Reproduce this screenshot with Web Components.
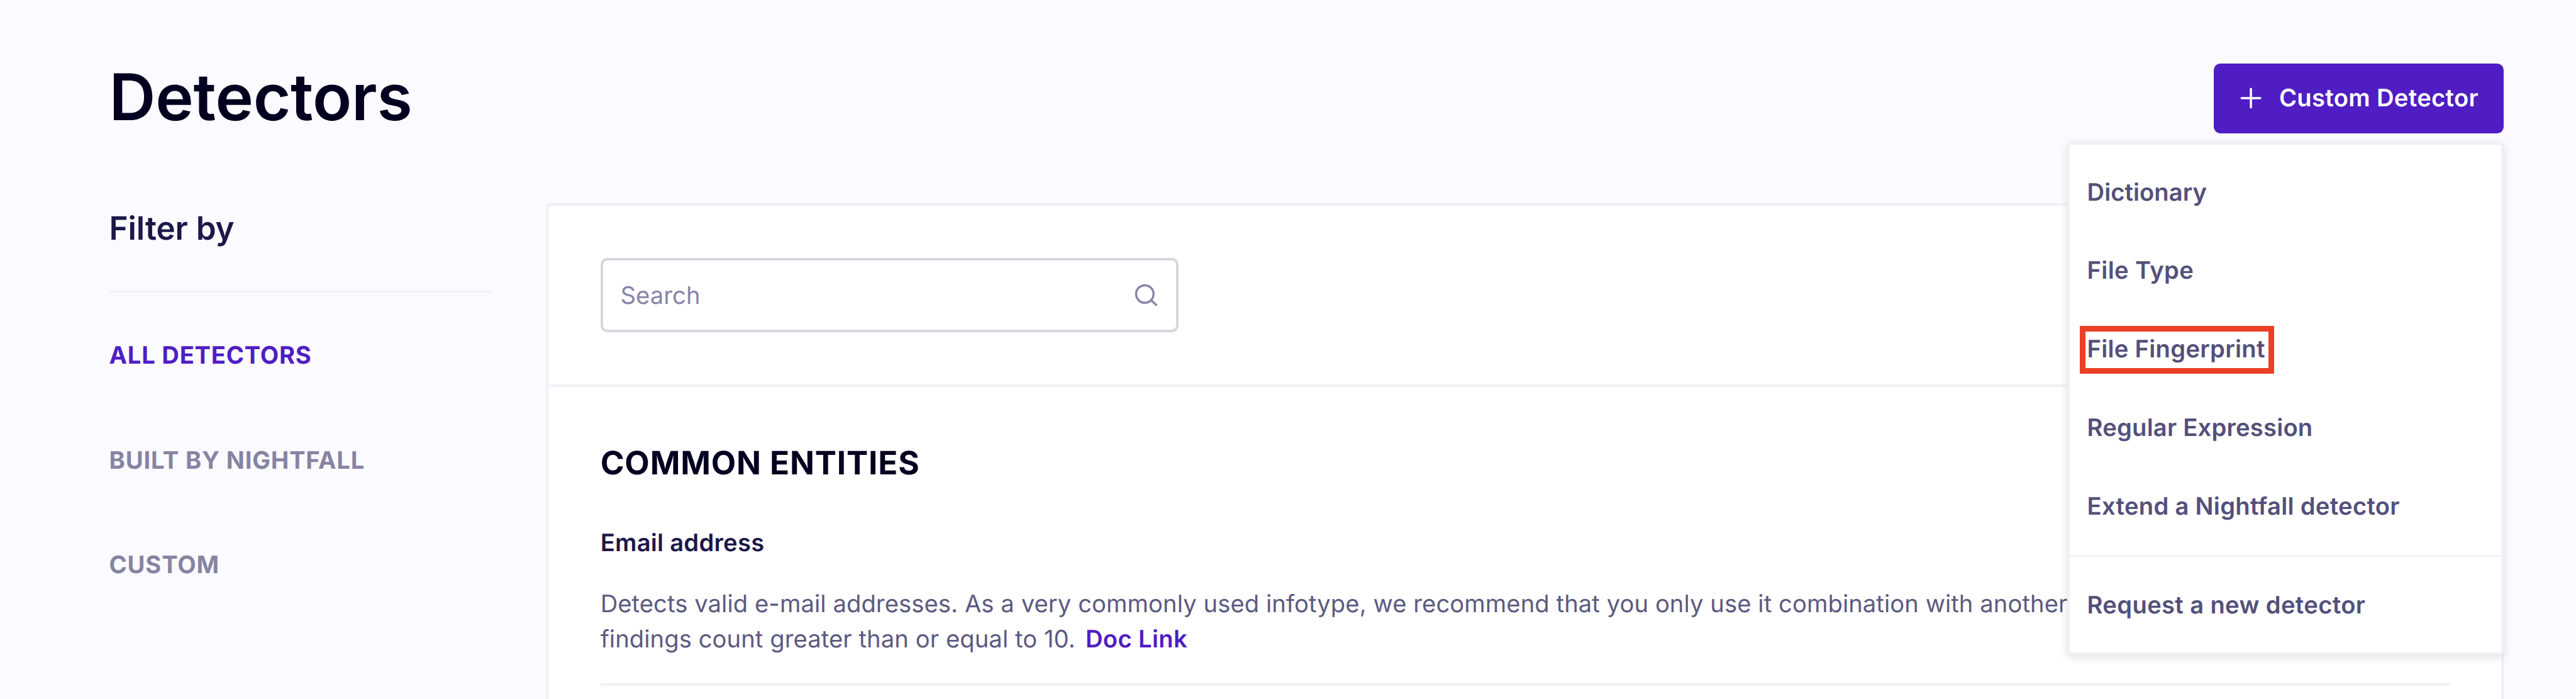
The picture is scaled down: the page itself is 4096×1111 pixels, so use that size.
<!DOCTYPE html>
<html lang="en">
<head>
<meta charset="utf-8">
<title>Detectors</title>
<style>
  html, body { margin: 0; height: 100%; overflow: hidden; background: #fbfaff; }
</style>
</head>
<body>
<detectors-page></detectors-page>

<script>
const define = (name, html) => customElements.define(name, class extends HTMLElement {
  constructor() {
    super();
    const t = document.createElement('template');
    t.innerHTML = html;
    this.attachShadow({ mode: 'open' }).append(t.content.cloneNode(true));
  }
});

define('filter-nav', `
<style>
  :host { display: block; width: 704px; flex: none; }
  h2 { margin: 0; padding-top: 2px; font-size: 59px; font-weight: 600; line-height: 88px; letter-spacing: -.1px; color: #1c1848; }
  hr { margin: 70px 0 0; border: 0; height: 4px; background: #f2f1f6; }
  nav { display: flex; flex-direction: column; gap: 128px; padding-top: 84px; }
  ::slotted(a) { font-size: 44px; font-weight: 700; line-height: 64px; letter-spacing: .95px; color: #8684a2; }
  ::slotted(a.active) { color: #4f1dc3; letter-spacing: .88px; }
</style>
<h2>Filter by</h2>
<hr>
<nav><slot></slot></nav>`);

define('search-field', `
<style>
  :host { display: flex; align-items: center; justify-content: space-between; box-sizing: border-box;
    width: 1060px; height: 136px; padding: 0 34px 0 32px; border: 4.65px solid #d6d5e0; border-radius: 12px;
    font-size: 44px; letter-spacing: .1px; color: #8885a8; background: #fff; }
  span { padding-top: 4px; }
  svg { width: 44px; height: 44px; }
</style>
<span>Search</span>
<svg viewBox="0 0 44 44" fill="none" stroke="#8885a8" stroke-width="4"><circle cx="20" cy="20" r="16"/><path d="M31.3 31.3 42 41"/></svg>`);

define('detector-entry', `
<style>
  :host { display: block; border-bottom: 4.65px solid #f1f0f6; padding-bottom: 48px; }
  h4 { margin: 0 0 48px; font-size: 44px; font-weight: 600; line-height: 64px; letter-spacing: .3px; color: #1c1848; }
  p { margin: 0; font-size: 44px; line-height: 64px; letter-spacing: .09px; color: #5c5a80; white-space: nowrap; }
  ::slotted(a) { font-weight: 600; letter-spacing: .41px; color: #4f1dc3; margin-left: 6px; }
</style>
<h4><slot name="title"></slot></h4>
<p><slot></slot></p>`);

define('detector-card', `
<style>
  :host { display: block; flex: 1; min-width: 0; box-sizing: border-box; height: 960px; margin-left: 96px;
    border: 4.65px solid #f1f0f5; border-radius: 10px; background: #fff; }
  .toolbar { padding: 95.5px 96px 95.5px 95.5px; border-bottom: 4.65px solid #f1f0f5; }
  .list { padding: 101px 95.5px 0; }
  h3 { margin: 0 0 74px; font-size: 59px; font-weight: 700; line-height: 80px; letter-spacing: 1px; color: #03001f; }
</style>
<div class="toolbar"><search-field></search-field></div>
<div class="list"><h3>COMMON ENTITIES</h3><slot></slot></div>`);

define('primary-button', `
<style>
  :host { display: flex; align-items: center; gap: 30px; box-sizing: border-box; width: 532px; height: 128px;
    padding-left: 46px; border-radius: 12px; background: #4f1dc3; color: #fff; font-size: 44px; font-weight: 600;
    letter-spacing: .37px; white-space: nowrap; }
  svg { width: 44px; height: 44px; flex: none; }
</style>
<svg viewBox="0 0 44 44" fill="none" stroke="#fff" stroke-width="4" stroke-linecap="round"><path d="M22 5v34M5 22h34"/></svg>
<span><slot></slot></span>`);

define('menu-item', `
<style>
  :host { display: flex; align-items: center; position: relative; height: 144px; padding-left: 31.5px;
    font-size: 44px; font-weight: 600; letter-spacing: .33px; color: #53507a; white-space: nowrap; }
  i { display: none; }
  :host([marked]) i { display: block; position: absolute; left: 18.5px; top: 29px; width: 356px; height: 87.5px;
    box-sizing: border-box; border: 10.4px solid #eb4024; }
</style>
<slot></slot><i></i>`);

define('drop-menu', `
<style>
  :host { display: block; position: absolute; z-index: 2; top: calc(100% + 16px); right: 0; width: 800px; box-sizing: border-box;
    border: 4.65px solid #f1f0f5; border-radius: 8px; background: #fff; padding: 15.5px 0 15.5px;
    box-shadow: 0 4px 16px rgba(0, 0, 0, .12); }
  hr { border: 0; height: 4px; margin: 16px 0 16px; background: #f1f0f5; }
</style>
<slot></slot><hr><slot name="footer"></slot>`);

define('page-header', `
<style>
  :host { display: flex; justify-content: space-between; align-items: center; height: 128px; }
  h1 { margin: 0; padding-bottom: 3px; font-size: 118px; font-weight: 600; line-height: 128px; letter-spacing: -.3px; color: #03001f; }
  .action { position: relative; }
</style>
<h1>Detectors</h1>
<div class="action"><slot></slot></div>`);

define('detectors-page', `
<style>
  :host { display: block; box-sizing: border-box; width: 4720px; height: 1280px; zoom: .8678; overflow: hidden;
    padding: 116px 132px 0 200px; background: #fbfaff; font-family: Inter, "Open Sans", sans-serif; text-rendering: geometricPrecision; }
  main { display: flex; align-items: flex-start; margin-top: 128px; }
</style>
<page-header>
  <primary-button>Custom Detector</primary-button>
  <drop-menu>
    <menu-item style="letter-spacing:.05px">Dictionary</menu-item>
    <menu-item style="letter-spacing:.42px">File Type</menu-item>
    <menu-item marked>File Fingerprint</menu-item>
    <menu-item style="letter-spacing:.25px">Regular Expression</menu-item>
    <menu-item>Extend a Nightfall detector</menu-item>
    <menu-item slot="footer" style="letter-spacing:.4px">Request a new detector</menu-item>
  </drop-menu>
</page-header>
<main>
  <filter-nav><a class="active">ALL DETECTORS</a><a>BUILT BY NIGHTFALL</a><a>CUSTOM</a></filter-nav>
  <detector-card>
    <detector-entry><span slot="title">Email address</span>Detects valid e-mail addresses. As a very commonly used infotype, we recommend that you only use it combination with another<br>findings count greater than or equal to 10. <a>Doc Link</a></detector-entry>
  </detector-card>
</main>`);
</script>
</body>
</html>
